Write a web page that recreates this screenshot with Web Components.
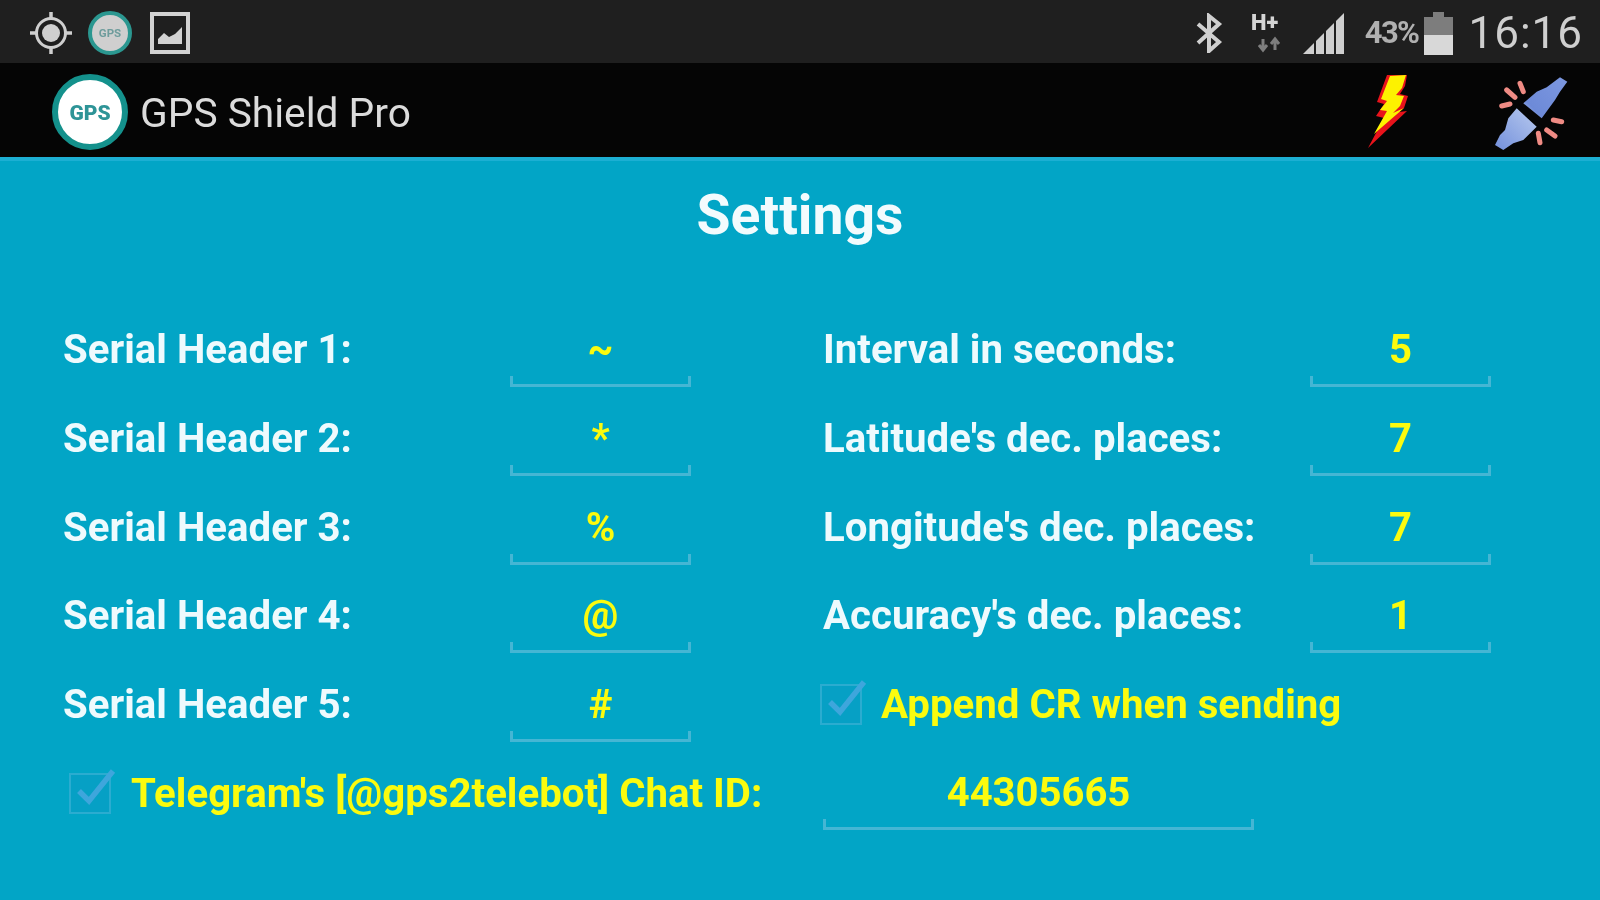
<!DOCTYPE html>
<html lang="en"><head><meta charset="utf-8"><title>GPS Shield Pro</title>
<style>html,body{margin:0;padding:0;width:1600px;height:900px;overflow:hidden;background:#02a5c6;font-family:Roboto,sans-serif}</style>
</head><body>
<app-shell>
  <status-bar></status-bar>
  <action-bar title="GPS Shield Pro"></action-bar>
  <settings-panel heading="Settings">
    <setting-row label="Serial Header 1:" value="~" label2="Interval in seconds:" value2="5"></setting-row>
    <setting-row label="Serial Header 2:" value="*" label2="Latitude's dec. places:" value2="7"></setting-row>
    <setting-row label="Serial Header 3:" value="%" label2="Longitude's dec. places:" value2="7"></setting-row>
    <setting-row label="Serial Header 4:" value="@" label2="Accuracy's dec. places:" value2="1"></setting-row>
    <setting-row label="Serial Header 5:" value="#" check2="Append CR when sending"></setting-row>
    <telegram-row label="Telegram's [@gps2telebot] Chat ID:" value="44305665"></telegram-row>
  </settings-panel>
</app-shell>
<script>
const CHECK=`<svg width="50" height="48" viewBox="0 0 50 48" aria-hidden="true"><rect x="2" y="7" width="40" height="39" fill="#0a9cc4" fill-opacity=".45" stroke="#2bacd0" stroke-width="2"/><path d="M11 24 L21 34 L45 4" fill="none" stroke="#3ea6dc" stroke-width="5.5" stroke-linejoin="miter"/></svg>`;
function def(name,cls){customElements.define(name,cls)}
class Base extends HTMLElement{
  render(html){(this.shadowRoot||this.attachShadow({mode:'open'})).innerHTML=html}
  a(n){return this.getAttribute(n)||''}
}
def('app-shell',class extends Base{connectedCallback(){this.render(`<style>:host{display:flex;flex-direction:column;width:1600px;height:900px}</style><slot></slot>`)}});
def('status-bar',class extends Base{connectedCallback(){this.render(`<style>
:host{display:flex;flex:none;align-items:center;height:63px;box-sizing:border-box;background:#1f1f1f;color:#c9c9c9;padding:2px 17px 0 29px;filter:blur(.6px)}
.l{display:flex;align-items:center}.sp{flex:1}
.r{display:flex;align-items:center}
.pct{font:700 31px/1 Roboto,sans-serif;color:#b0b0b0;letter-spacing:-1.6px;margin-left:19px}
.time{font:400 44px/1 Roboto,sans-serif;color:#cfcfcf;margin-left:14px;letter-spacing:1px}
svg{display:block}
</style>
<div class="l">
<svg width="44" height="44" viewBox="0 0 44 44"><g fill="none" stroke="#cfcfcf"><circle cx="22" cy="22" r="14.5" stroke-width="3"/><path d="M22 1v7M22 36v7M1 22h7M36 22h7" stroke-width="3.5"/></g><circle cx="22" cy="22" r="9" fill="#cfcfcf"/></svg>
<svg style="margin-left:15px" width="44" height="44" viewBox="0 0 44 44"><circle cx="22" cy="22" r="20" fill="#cfcfcf" stroke="#2b9790" stroke-width="4"/><text x="22" y="26" text-anchor="middle" font-family="Roboto,sans-serif" font-weight="700" font-size="11.5" fill="#6e9c9c">GPS</text></svg>
<svg style="margin-left:17px" width="42" height="44" viewBox="0 0 42 44"><rect x="3" y="3" width="36" height="38" fill="none" stroke="#d2d2d2" stroke-width="4"/><path d="M9 33 V28 L15 22 L20 26 L26 23 L33 16 V33Z" fill="#d2d2d2"/></svg>
</div><div class="sp"></div>
<div class="r">
<svg width="28" height="40" viewBox="0 0 28 40"><path d="M3 11 L24 29 L14 38 V3 L24 11 L3 30" fill="none" stroke="#cfcfcf" stroke-width="4"/></svg>
<svg style="margin-left:28px" width="36" height="44" viewBox="0 0 36 44"><text x="0" y="19" font-family="Roboto,sans-serif" font-weight="900" font-size="22" fill="#d4d4d4">H+</text><path d="M12 28v11M8 34l4 5 4-5M24 39V28M20 33l4-5 4 5" fill="none" stroke="#7e7e7e" stroke-width="3"/></svg>
<svg style="margin-left:15px" width="44" height="46" viewBox="0 0 44 46"><path d="M1 44 L42 3 V44Z" fill="#cfcfcf"/><path d="M13 44V30M23 44V20M33 44V10" stroke="#1f1f1f" stroke-width="2"/></svg>
<span class="pct">43%</span>
<svg style="margin-left:6px" width="30" height="44" viewBox="0 0 30 44"><path d="M9 1h11v5h9v38H0V6h9z" fill="#7d7d7d"/><rect y="24" width="29" height="20" fill="#d8d8d8"/></svg>
<span class="time">16:16</span>
</div>`)}});
def('action-bar',class extends Base{connectedCallback(){this.render(`<style>
:host{display:flex;flex:none;align-items:center;height:98px;box-sizing:border-box;background:#050505;border-bottom:4px solid #1cafd3;padding:4px 31px 0 51px;color:#dcdcdc;filter:blur(.6px)}
h1{margin:3px 0 0 11px;font:400 40.7px/1 Roboto,sans-serif;flex:1}
svg{display:block}
</style>
<svg width="78" height="78" viewBox="0 0 78 78"><circle cx="39" cy="39" r="35" fill="#fff" stroke="#14918c" stroke-width="6"/><text x="39" y="46.5" text-anchor="middle" font-family="Roboto,sans-serif" font-weight="900" font-size="21" fill="#2e9497">GPS</text></svg>
<h1>${this.a('title')}</h1>
<svg width="42" height="76" viewBox="0 0 42 76"><path d="M1 74 L17 44 L9 42 L17 30 L10 28 L20 1 L40 1 L38 12 L33 20 L41 22 L37 34 L32 38 L40 37 Z" fill="#e8131b"/><path d="M7 60 L20 37 L13 36 L20 27 L14 25 L23 2 L39 1 L35 14 L29 21 L37 22 L33 32 L26 39 L37 34 Z" fill="#fdf200"/></svg>
<svg style="margin:3px 0 0 86px" width="74" height="74" viewBox="0 0 74 74"><defs><linearGradient id="p" x1="0" y1="1" x2="1" y2="0"><stop offset="0" stop-color="#7390dc"/><stop offset=".45" stop-color="#a9bdea"/><stop offset=".55" stop-color="#6d8ad8"/><stop offset="1" stop-color="#7d98e0"/></linearGradient></defs><path d="M28.3 26.3 L41.7 14.7 L51.7 10.3 L65 .3 L72.3 4.7 L65 14.7 L60 23 L46.7 41.3Z M21.7 31.3 L41.7 49.7 L28.3 63 L18.3 66.3 L8.3 73 L0 68 L5 58 L10 53 L13.3 41.3Z" fill="url(#p)"/><path d="M22 28 L47 51" stroke="#050505" stroke-width="3.5"/><g stroke="#ef8b84" stroke-width="5" stroke-linecap="round"><path d="M25 6.3L28.3 14.7M11.7 13L20 20.3M6.7 29L15 27M58.3 43L66.7 44.7M51.7 53L60 59M43.3 56.3L45 65.7"/></g></svg>`)}});
def('settings-panel',class extends Base{connectedCallback(){this.render(`<style>
:host{display:flex;flex-direction:column;flex:1;min-height:0;background:#02a5c6;padding:27px 63px 0;box-sizing:border-box;filter:blur(.6px)}
h2{margin:0 0 63px;text-align:center;font:700 55.3px/1 Roboto,sans-serif;color:#f2fbfd;height:55px}
.rows{display:flex;flex-direction:column;gap:0}
</style><h2>${this.a('heading')}</h2><div class="rows"><slot></slot></div>`)}});
const FIELD=`
.lab{font:700 40.2px/1 Roboto,sans-serif;color:#eefafd;white-space:nowrap}
.yl{color:#fbfb0e}
.inp{box-sizing:border-box;height:74px;text-align:center;font:700 40px/73px Roboto,sans-serif;color:#fbfb0e;border:solid #45b6d4;border-width:0 3px 3px;border-image:linear-gradient(to bottom,transparent 0,transparent 63px,#45b6d4 63px) 3;}
`;
def('setting-row',class extends Base{connectedCallback(){
 const right=this.hasAttribute('check2')
  ?`<div class="chk">${CHECK}<span class="lab yl">${this.a('check2')}</span></div>`
  :`<span class="lab">${this.a('label2')}</span><div class="inp">${this.a('value2')}</div>`;
 this.render(`<style>:host{display:grid;flex:none;grid-template-columns:447px 181px 132px 487px 181px;height:88.7px;align-items:center}
${FIELD}.chk{display:flex;align-items:center;gap:12px;margin-left:-4px;grid-column:4/6;margin-top:-6px}.chk .lab{margin-top:6px}
</style><span class="lab">${this.a('label')}</span><div class="inp">${this.a('value')}</div><span></span>${right}`)}});
def('telegram-row',class extends Base{connectedCallback(){this.render(`<style>:host{display:flex;flex:none;height:88.7px;align-items:center}
${FIELD}.chk{display:flex;align-items:center;gap:13px;width:760px;box-sizing:border-box;padding-left:5px;margin-top:-6px}.chk .lab{margin-top:6px}.inp{width:431px;margin-top:-2px}
</style><div class="chk">${CHECK}<span class="lab yl">${this.a('label')}</span></div><div class="inp">${this.a('value')}</div>`)}});
</script>
</body></html>
